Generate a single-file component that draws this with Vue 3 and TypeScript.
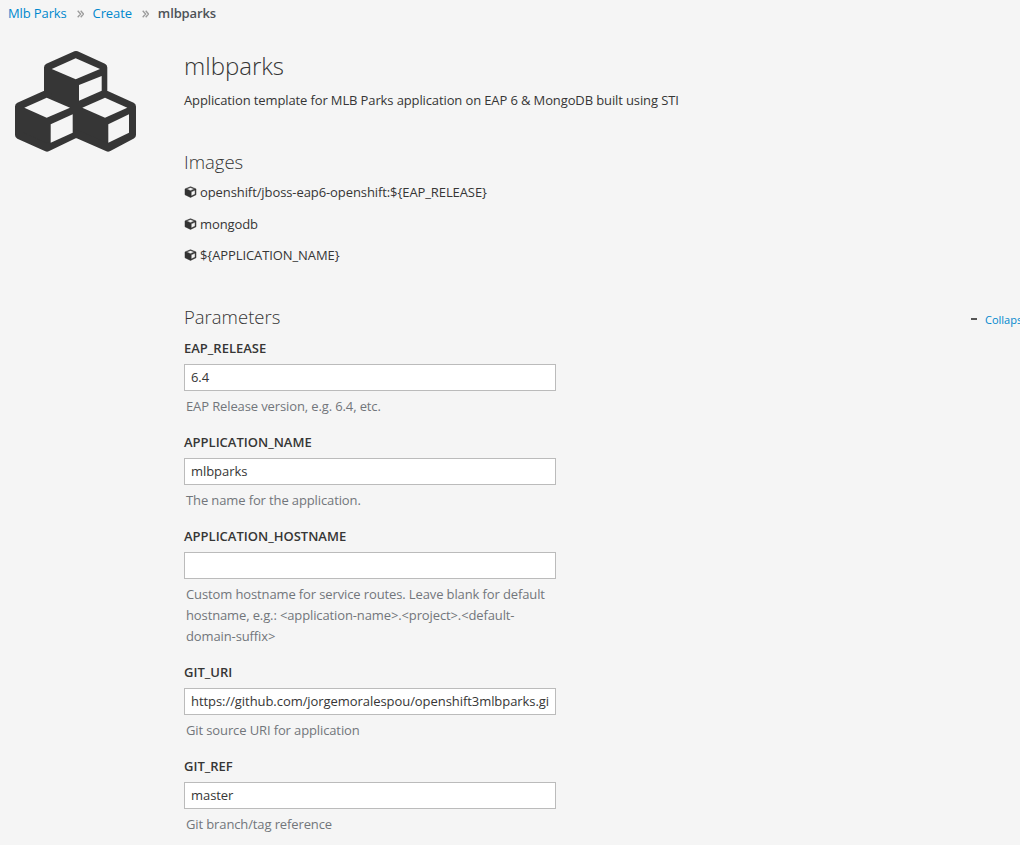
<script setup lang="ts">
interface Field { name: string; value: string; help: string }
const images: string[] = ['openshift/jboss-eap6-openshift:${EAP_RELEASE}', 'mongodb', '${APPLICATION_NAME}']
const fields: Field[] = [
  { name: 'EAP_RELEASE', value: '6.4', help: 'EAP Release version, e.g. 6.4, etc.' },
  { name: 'APPLICATION_NAME', value: 'mlbparks', help: 'The name for the application.' },
  { name: 'APPLICATION_HOSTNAME', value: '', help: 'Custom hostname for service routes. Leave blank for default hostname, e.g.: <application-name>.<project>.<default-domain-suffix>' },
  { name: 'GIT_URI', value: 'https://github.com/jorgemoralespou/openshift3mlbparks.git', help: 'Git source URI for application' },
  { name: 'GIT_REF', value: 'master', help: 'Git branch/tag reference' },
]
</script>

<template>
  <div class="page">
    <nav class="crumbs">
      <a class="link">Mlb Parks</a>
      <svg class="sep" width="7" height="8" viewBox="0 0 7 8"><path fill="none" stroke="#9c9c9c" stroke-width="1.300" d="M.7 .8 L3.600 4 L.7 7.200 M3.700 .8 L6.500 4 L3.700 7.200" /></svg>
      <a class="link">Create</a>
      <svg class="sep" width="7" height="8" viewBox="0 0 7 8"><path fill="none" stroke="#9c9c9c" stroke-width="1.300" d="M.7 .8 L3.600 4 L.7 7.200 M3.700 .8 L6.500 4 L3.700 7.200" /></svg>
      <strong class="current">mlbparks</strong>
    </nav>
    <div class="main">
      <div class="logo">
        <svg width="121" height="102" viewBox="15 50 121 102">
          <path fill="#363636" stroke="#363636" stroke-width="8" stroke-linejoin="round"
            d="M76 55 L103.300 67.500 L103.300 93.500 L132 106.500 L132 135 L108 147.700 L76 133.700 L47 147.700 L19 135 L19 106.500 L48 93.500 L48 67.500 Z" />
          <g fill="#f5f5f5">
            <path d="M51.700 69 L75.700 58.300 L100 69 L75.700 79.300 Z" />
            <path d="M79 85 L101.700 76 L101.700 90.700 L79 100.700 Z" />
            <path d="M24.300 107.700 L46.700 97.700 L70 107.700 L46.700 117.700 Z" />
            <path d="M50.700 124.300 L72.700 114.300 L72.700 132.700 L50.700 142.700 Z" />
            <path d="M82.300 107.700 L105 97.700 L127.300 107.700 L105 117.700 Z" />
            <path d="M108.300 124.300 L129 114.300 L129 132.700 L108.300 142.700 Z" />
          </g>
        </svg>
      </div>
      <div class="content">
        <h1 class="title">mlbparks</h1>
        <p class="desc">Application template for MLB Parks application on EAP 6 &amp; MongoDB built using STI</p>
        <h2 class="images-head">Images</h2>
        <div class="image-row" v-for="img in images" :key="img">
          <svg class="cube" width="13" height="12" viewBox="0 0 13 12">
            <path fill="#333" stroke="#333" stroke-width=".5" stroke-linejoin="round" fill-rule="evenodd"
              d="M6.500 .7 L12 2.900 V8.800 L6.500 11.400 L1 8.800 V2.900 Z M2.500 3 L6.500 4.700 L10.500 3 L6.500 1.500 Z M7.200 5.800 V10 L11.100 8.200 V4.100 Z" />
          </svg>
          <span>{{ img }}</span>
        </div>
        <div class="params-head">
          <h2 class="params-title">Parameters</h2>
          <div class="collapse"><span class="minus"></span><a class="link small">Collapse all</a></div>
        </div>
        <div class="field" v-for="f in fields" :key="f.name">
          <label class="label">{{ f.name }}</label>
          <input class="input" type="text" :value="f.value" readonly />
          <div class="help">{{ f.help }}</div>
        </div>
      </div>
    </div>
  </div>
</template>

<style scoped>
.page {
  width: 1020px;
  height: 845px;
  overflow: hidden;
  background: #f5f5f5;
  color: #363636;
  font-family: "Open Sans", sans-serif;
  font-size: 13px;
  letter-spacing: -0.12px;
}
.crumbs {
  display: flex;
  align-items: center;
  height: 26px;
  padding-left: 8px;
  font-size: 13px;
}
.link { color: #0088ce; }
.sep { margin: 1px 9px 0 10px; flex: none; }
.current { font-weight: 600; color: #4d5258; }
.main { display: flex; align-items: flex-start; }
.logo { width: 184px; padding: 24px 0 0 15px; box-sizing: border-box; flex: none; }
.logo svg { display: block; }
.content { width: 836px; flex: none; padding-top: 22px; }
.title { margin: 0; font-size: 24px; font-weight: 300; line-height: 36px; letter-spacing: 0; }
.desc { margin: 7px 0 0; line-height: 18px; }
.images-head { margin: 40px 0 0; font-size: 18.500px; font-weight: 300; line-height: 26px; letter-spacing: 0; }
.image-row { display: flex; align-items: center; gap: 3px; height: 20px; margin-top: 11.500px; letter-spacing: -0.09px; }
.images-head + .image-row { margin-top: 7px; }
.cube { flex: none; }
.params-head { display: flex; justify-content: space-between; align-items: flex-end; margin-top: 39px; height: 26px; }
.params-title { margin: 0; font-size: 18.500px; font-weight: 300; line-height: 26px; letter-spacing: 0; }
.collapse { display: flex; align-items: center; gap: 8px; width: 49px; white-space: nowrap; font-size: 11px; height: 22px; letter-spacing: 0; }
.minus { width: 6px; height: 2px; background: #555; flex: none; }
.small { font-size: 11px; }
.field { display: flex; flex-direction: column; align-items: flex-start; margin-bottom: 7px; }
.label { font-weight: 600; line-height: 18px; margin: 9px 0 7px; letter-spacing: 0; }
.input {
  width: 372px;
  height: 27px;
  box-sizing: border-box;
  border: 1px solid #bbb;
  background: #fff;
  padding: 0 6px 2px;
  font: 13px "Open Sans", sans-serif;
  letter-spacing: -0.06px;
  color: #363636;
  outline: none;
}
.help { width: 368px; margin: 5px 0 0 2px; line-height: 21px; color: #72767b; }
</style>

<style>
html, body { margin: 0; background: #f5f5f5; overflow: hidden; }
</style>
